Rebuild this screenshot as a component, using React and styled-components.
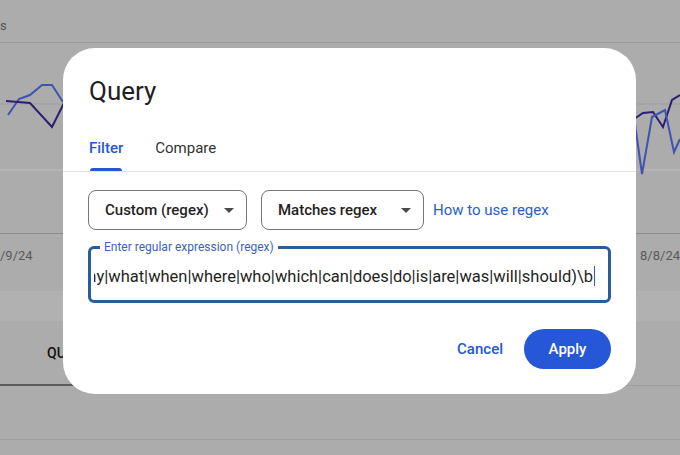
import React from 'react';
import styled, { createGlobalStyle } from 'styled-components';

const GlobalStyle = createGlobalStyle`
  html, body {
    margin: 0;
    padding: 0;
    background: #acacac;
  }
  body {
    font-family: Roboto, "Open Sans", Arial, sans-serif;
  }
`;

const REGEX =
  '\\b(how|why|what|when|where|who|which|can|does|do|is|are|was|will|should)\\b';

function Caret() {
  return (
    <svg width='10' height='5' viewBox='0 0 10 5'>
      <path d='M0 0 L10 0 L5 5 Z' fill='#4a4a4a' />
    </svg>
  );
}

function Chart() {
  return (
    <svg width='680' height='190' viewBox='0 44 680 190'>
      <line x1='0' y1='105' x2='680' y2='105' stroke='#9e9e9e' strokeWidth='1' />
      <line x1='0' y1='171' x2='680' y2='171' stroke='#bdbdbd' strokeWidth='1' />
      <polyline
        points='8,116 19,100 30,96 42,86 52,86 63,103'
        fill='none'
        stroke='#3f53b0'
        strokeWidth='2'
      />
      <polyline
        points='6,102 30,104 52,128 64,104'
        fill='none'
        stroke='#2b1f72'
        strokeWidth='2'
      />
      <polyline
        points='634,120 643,114 653,113 663,128 672,101 680,96'
        fill='none'
        stroke='#2b1f72'
        strokeWidth='2'
      />
      <polyline
        points='634,118 642,175 652,118 665,111 674,153 680,140'
        fill='none'
        stroke='#3f53b0'
        strokeWidth='2'
      />
    </svg>
  );
}

export default function App() {
  return (
    <>
      <GlobalStyle />
      <Page>
        <TopBar>s</TopBar>
        <ChartArea>
          <Chart />
        </ChartArea>
        <DateRow>
          <span>/9/24</span>
          <span>8/8/24</span>
        </DateRow>
        <Band />
        <TabBar>
          <BgTab $active>QUERIES</BgTab>
        </TabBar>
        <Row />

        <Dialog>
          <Title>Query</Title>
          <Tabs>
            <Tab $active>Filter</Tab>
            <Tab>Compare</Tab>
          </Tabs>
          <Body>
            <Controls>
              <Select $width={159}>
                <span>Custom (regex)</span>
                <Caret />
              </Select>
              <Select $width={163}>
                <span>Matches regex</span>
                <Caret />
              </Select>
              <Link>How to use regex</Link>
            </Controls>
            <Field>
              <Legend>Enter regular expression (regex)</Legend>
              <FieldText>
                <span>{REGEX}</span>
                <Cursor />
              </FieldText>
            </Field>
            <Actions>
              <TextButton>Cancel</TextButton>
              <PrimaryButton>Apply</PrimaryButton>
            </Actions>
          </Body>
        </Dialog>
      </Page>
    </>
  );
}

const Page = styled.div`
  position: relative;
  width: 680px;
  height: 455px;
  overflow: hidden;
  background: #acacac;
  display: flex;
  flex-direction: column;
`;

const TopBar = styled.div`
  height: 43px;
  border-bottom: 1px solid #9a9a9a;
  display: flex;
  align-items: center;
  padding-top: 8px;
  box-sizing: border-box;
  font-size: 13px;
  color: #555;
`;

const ChartArea = styled.div`
  height: 190px;
  border-bottom: 1px solid #8c8c8c;
  svg {
    display: block;
  }
`;

const DateRow = styled.div`
  height: 57px;
  display: flex;
  justify-content: space-between;
  padding: 14px 0 0;
  box-sizing: border-box;
  font-size: 13px;
  color: #5a5a5a;
`;

const Band = styled.div`
  height: 30px;
  background: #b1b1b1;
`;

const TabBar = styled.div`
  height: 65px;
  border-bottom: 1px solid #9d9d9d;
  display: flex;
  box-sizing: border-box;
`;

const BgTab = styled.div`
  width: 150px;
  display: flex;
  align-items: center;
  padding-left: 47px;
  box-sizing: border-box;
  font-size: 14px;
  font-weight: 500;
  color: #111;
  border-bottom: 2px solid ${(p) => (p.$active ? '#5c5c5c' : 'transparent')};
  margin-bottom: -1px;
`;

const Row = styled.div`
  height: 53px;
  border-bottom: 1px solid #a0a0a0;
`;

const Dialog = styled.div`
  position: absolute;
  left: 63px;
  top: 48px;
  width: 573px;
  height: 346px;
  background: #fff;
  border-radius: 32px;
  display: flex;
  flex-direction: column;
  overflow: hidden;
`;

const Title = styled.h2`
  margin: 0;
  padding: 27px 26px 0;
  font-size: 26px;
  line-height: 32px;
  font-weight: 400;
  color: #1f1f1f;
`;

const Tabs = styled.div`
  display: flex;
  gap: 32px;
  margin-top: 18px;
  padding: 0 26px;
  border-bottom: 1px solid #e3e3e3;
`;

const Tab = styled.div`
  position: relative;
  height: 46px;
  display: flex;
  align-items: center;
  font-size: 15px;
  font-weight: ${(p) => (p.$active ? 500 : 400)};
  color: ${(p) => (p.$active ? '#2557d6' : '#333')};
  &::after {
    content: '';
    display: ${(p) => (p.$active ? 'block' : 'none')};
    position: absolute;
    left: 1px;
    right: 1px;
    bottom: 0;
    height: 3px;
    border-radius: 3px 3px 0 0;
    background: #2557d6;
  }
`;

const Body = styled.div`
  padding: 18px 25px 0;
  display: flex;
  flex-direction: column;
`;

const Controls = styled.div`
  display: flex;
  align-items: center;
  gap: 14px;
`;

const Select = styled.div`
  width: ${(p) => p.$width}px;
  height: 40px;
  box-sizing: border-box;
  border: 1px solid #767676;
  border-radius: 8px;
  display: flex;
  align-items: center;
  justify-content: space-between;
  padding: 0 12px 0 16px;
  font-size: 15px;
  font-weight: 500;
  color: #1f1f1f;
  svg {
    display: block;
  }
`;

const Link = styled.span`
  margin-left: -5px;
  font-size: 15px;
  color: #2a5bd0;
`;

const Field = styled.fieldset`
  margin: 10px 0 0;
  height: 63px;
  box-sizing: border-box;
  border: 3px solid #2a5d9a;
  border-radius: 6px;
  padding: 0 0 0 3px;
  min-width: 0;
`;

const Legend = styled.legend`
  margin-left: 6px;
  padding: 0 4px;
  font-size: 12px;
  line-height: 14px;
  color: #3d5fc4;
`;

const FieldText = styled.div`
  display: flex;
  justify-content: flex-end;
  align-items: center;
  overflow: hidden;
  white-space: nowrap;
  height: 38px;
  margin-top: 3px;
  padding-right: 13px;
  font-size: 16.5px;
  color: #1f1f1f;
  span {
    flex-shrink: 0;
  }
`;

const Cursor = styled.i`
  flex-shrink: 0;
  width: 1px;
  height: 20px;
  margin-left: 1px;
  background: #2557d6;
`;

const Actions = styled.div`
  display: flex;
  justify-content: flex-end;
  align-items: center;
  gap: 21px;
  margin-top: 26px;
`;

const TextButton = styled.button`
  border: none;
  background: transparent;
  padding: 0;
  font-family: inherit;
  font-size: 15px;
  font-weight: 500;
  color: #2557d6;
`;

const PrimaryButton = styled.button`
  width: 87px;
  height: 40px;
  border: none;
  border-radius: 20px;
  background: #2557d6;
  font-family: inherit;
  font-size: 15px;
  font-weight: 500;
  color: #fff;
`;
